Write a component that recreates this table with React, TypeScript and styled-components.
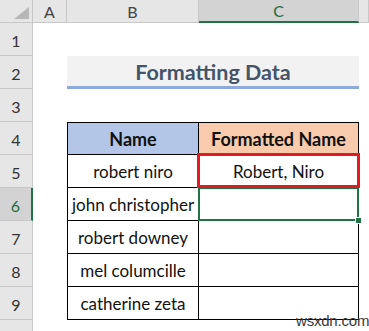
import React from "react";
import styled, { createGlobalStyle, css } from "styled-components";

const GlobalStyle = createGlobalStyle`
  html, body { margin: 0; padding: 0; background: #ffffff; }
  body { font-family: "Lato", "Open Sans", sans-serif; }
`;

const Sheet = styled.div`
  position: relative;
  width: 369px;
  height: 331px;
  overflow: hidden;
  display: grid;
  grid-template-columns: 33px 34px 132px 160px 1fr;
  grid-template-rows: 23px;
  grid-auto-rows: 33px;
  background: #ffffff;
`;

const Corner = styled.div`
  position: relative;
  box-sizing: border-box;
  background: #e6e6e6;
  border-right: 1px solid #c8c8c8;
  border-bottom: 1px solid #c8c8c8;
  &::after {
    content: "";
    position: absolute;
    right: 3px;
    bottom: 3px;
    width: 0;
    height: 0;
    border-left: 15px solid transparent;
    border-bottom: 12px solid #b7b7b7;
  }
`;

const ColHeader = styled.div<{ $active?: boolean }>`
  box-sizing: border-box;
  display: flex;
  align-items: center;
  justify-content: center;
  font-size: 16px;
  color: #444444;
  background: #e6e6e6;
  border-right: 1px solid #c8c8c8;
  border-bottom: 1px solid #c8c8c8;
  ${(p) =>
    p.$active &&
    css`
      background: #d3d3d3;
      color: #1e6b40;
      border-bottom: 2px solid #217346;
    `}
`;

const RowHeader = styled.div<{ $active?: boolean }>`
  box-sizing: border-box;
  display: flex;
  align-items: center;
  justify-content: center;
  padding-top: 2px;
  font-size: 16px;
  color: #333333;
  background: #e6e6e6;
  border-right: 1px solid #c8c8c8;
  border-bottom: 1px solid #c8c8c8;
  ${(p) =>
    p.$active &&
    css`
      background: #d3d3d3;
      color: #1e6b40;
      border-right: 2px solid #217346;
    `}
`;

const Blank = styled.div<{ $span?: number }>`
  grid-column: span ${(p) => p.$span ?? 1};
  background: #ffffff;
`;

const TitleCell = styled.div`
  grid-column: span 2;
  box-sizing: border-box;
  display: flex;
  align-items: center;
  justify-content: center;
  padding-top: 1px;
  background: #f2f2f2;
  border-bottom: 3px solid #8eaadb;
  font-size: 21.5px;
  font-weight: 700;
  color: #44546a;
`;

type Mark = "red" | "select";

const TableCell = styled.div<{
  $fill?: string;
  $head?: boolean;
  $left?: boolean;
  $top?: boolean;
  $mark?: Mark;
}>`
  position: relative;
  box-sizing: border-box;
  display: flex;
  align-items: center;
  justify-content: center;
  padding-top: 1px;
  background: ${(p) => p.$fill ?? "#ffffff"};
  color: #111111;
  font-size: ${(p) => (p.$head ? "18px" : "17px")};
  font-weight: ${(p) => (p.$head ? 700 : 400)};
  white-space: nowrap;
  border-right: 1px solid #000000;
  border-bottom: 1px solid #000000;
  ${(p) => p.$left && css`border-left: 1px solid #000000;`}
  ${(p) => p.$top && css`border-top: 1px solid #000000;`}
  ${(p) =>
    p.$mark === "red" &&
    css`
      &::after {
        content: "";
        position: absolute;
        left: -2px;
        top: -2px;
        right: -2px;
        bottom: -1px;
        border: 3px solid #e11b22;
        z-index: 3;
      }
    `}
  ${(p) =>
    p.$mark === "select" &&
    css`
      &::after {
        content: "";
        position: absolute;
        left: -1px;
        top: -1px;
        right: -1px;
        bottom: -1px;
        border: 2px solid #217346;
        z-index: 2;
      }
      &::before {
        content: "";
        position: absolute;
        right: -3px;
        bottom: -3px;
        width: 5px;
        height: 5px;
        background: #217346;
        box-shadow: 0 0 0 1px #ffffff;
        z-index: 4;
      }
    `}
`;

const Watermark = styled.div`
  position: absolute;
  left: 296px;
  top: 312px;
  font-family: "Liberation Sans", Arial, sans-serif;
  font-size: 15px;
  color: #3a3a3a;
  letter-spacing: -0.2px;
  z-index: 5;
`;

const names = ["robert niro", "john christopher", "robert downey", "mel columcille", "catherine zeta"];
const formatted: Record<number, string> = { 0: "Robert, Niro" };

export default function App() {
  return (
    <>
      <GlobalStyle />
      <Sheet>
        <Corner />
        <ColHeader>A</ColHeader>
        <ColHeader>B</ColHeader>
        <ColHeader $active>C</ColHeader>
        <ColHeader />

        <RowHeader>1</RowHeader>
        <Blank $span={4} />

        <RowHeader>2</RowHeader>
        <Blank />
        <TitleCell>Formatting Data</TitleCell>
        <Blank />

        <RowHeader>3</RowHeader>
        <Blank $span={4} />

        <RowHeader>4</RowHeader>
        <Blank />
        <TableCell $head $left $top $fill="#b4c6e7">Name</TableCell>
        <TableCell $head $top $fill="#f8cbad">Formatted Name</TableCell>
        <Blank />

        {names.map((n, i) => (
          <React.Fragment key={n}>
            <RowHeader $active={i === 1}>{i + 5}</RowHeader>
            <Blank />
            <TableCell $left>{n}</TableCell>
            <TableCell $mark={i === 0 ? "red" : i === 1 ? "select" : undefined}>
              {formatted[i] ?? ""}
            </TableCell>
            <Blank />
          </React.Fragment>
        ))}

        <RowHeader />
        <Blank $span={4} />
        <Watermark>wsxdn.com</Watermark>
      </Sheet>
    </>
  );
}
